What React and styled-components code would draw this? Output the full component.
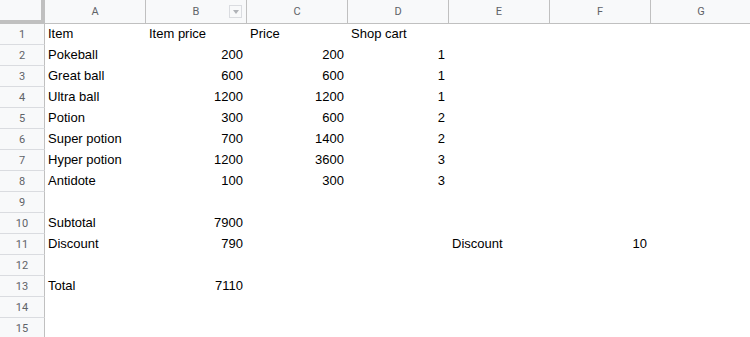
import React from 'react'
import styled, { createGlobalStyle } from 'styled-components'

const GlobalStyle = createGlobalStyle`
  html, body {
    margin: 0;
    padding: 0;
    background: #fff;
    overflow: hidden;
  }
  * {
    box-sizing: border-box;
  }
`

const Sheet = styled.div`
  display: grid;
  grid-template-columns: 45px repeat(7, 101px);
  grid-auto-rows: 21px;
  grid-template-rows: 24px;
  width: 750px;
  height: 337px;
  overflow: hidden;
  font-family: Arial, 'Liberation Sans', sans-serif;
`

const Corner = styled.div`
  background: #f8f9fa;
  border-right: 4px solid #c0c0c0;
  border-bottom: 4px solid #c0c0c0;
`

const ColHead = styled.div`
  position: relative;
  display: flex;
  align-items: center;
  justify-content: center;
  background: #f8f9fa;
  border-right: 1px solid #c0c0c0;
  border-bottom: 1px solid #c0c0c0;
  color: #5f6368;
  font-family: Roboto, Arial, sans-serif;
  font-size: 11px;
`

const FilterButton = styled.span`
  position: absolute;
  right: 4px;
  top: 5px;
  width: 13px;
  height: 13px;
  border: 1px solid #dadce0;
  background: #f8f9fa;
  display: flex;
  align-items: center;
  justify-content: center;

  &::after {
    content: '';
    border-left: 3.5px solid transparent;
    border-right: 3.5px solid transparent;
    border-top: 4px solid #b0b3b8;
  }
`

const RowHead = styled.div`
  display: flex;
  align-items: center;
  justify-content: center;
  background: #f8f9fa;
  border-right: 1px solid #c0c0c0;
  border-bottom: 1px solid #dadce0;
  color: #5f6368;
  font-family: Roboto, Arial, sans-serif;
  font-size: 11px;
`

const Cell = styled.div`
  display: flex;
  align-items: center;
  justify-content: ${props => (props.$numeric ? 'flex-end' : 'flex-start')};
  padding: 0 ${props => (props.$numeric ? '4px' : '3px')} 2px;
  font-size: 13px;
  color: #000;
  white-space: nowrap;
  overflow: visible;
`

const columns = ['A', 'B', 'C', 'D', 'E', 'F', 'G']

const rows = [
  ['Item', 'Item price', 'Price', 'Shop cart'],
  ['Pokeball', 200, 200, 1],
  ['Great ball', 600, 600, 1],
  ['Ultra ball', 1200, 1200, 1],
  ['Potion', 300, 600, 2],
  ['Super potion', 700, 1400, 2],
  ['Hyper potion', 1200, 3600, 3],
  ['Antidote', 100, 300, 3],
  [],
  ['Subtotal', 7900],
  ['Discount', 790, '', '', 'Discount', 10],
  [],
  ['Total', 7110],
  [],
  [],
]

const App = () => (
  <>
    <GlobalStyle />
    <Sheet>
      <Corner />
      {columns.map(col => (
        <ColHead key={col}>
          {col}
          {col === 'B' && <FilterButton />}
        </ColHead>
      ))}
      {rows.map((row, r) => (
        <React.Fragment key={r}>
          <RowHead>{r + 1}</RowHead>
          {columns.map((col, c) => {
            const value = row[c]
            return (
              <Cell key={col} $numeric={typeof value === 'number'}>
                {value}
              </Cell>
            )
          })}
        </React.Fragment>
      ))}
    </Sheet>
  </>
)

export default App
